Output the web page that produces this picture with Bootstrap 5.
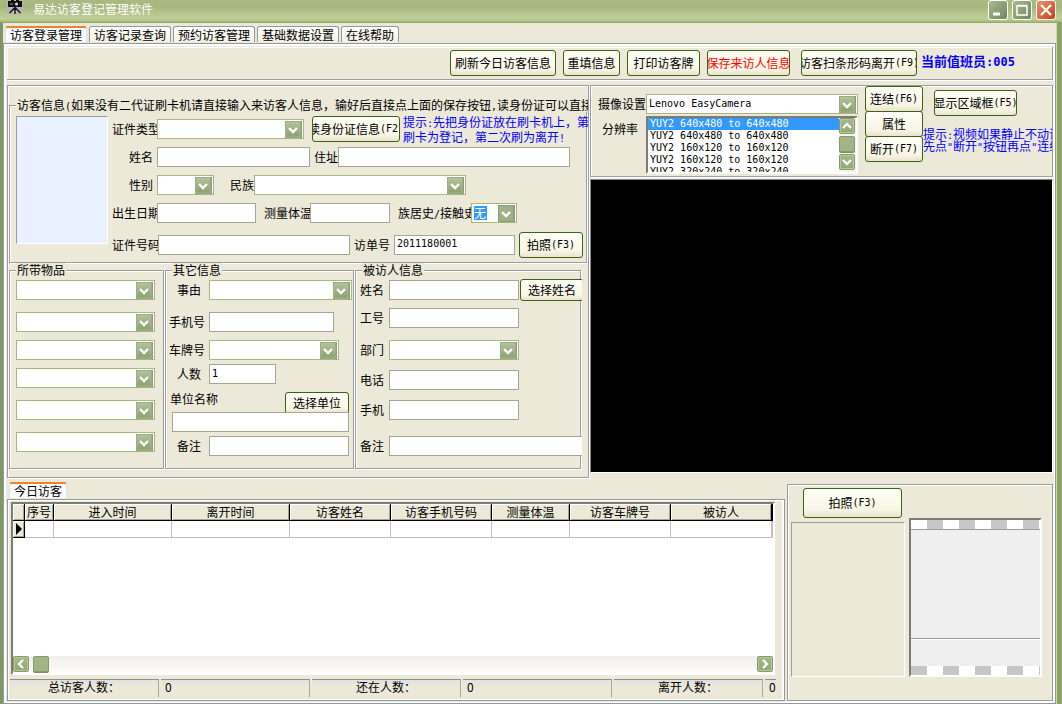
<!DOCTYPE html>
<html lang="zh-CN">
<head>
<meta charset="utf-8">
<meta name="viewport" content="width=device-width, initial-scale=1">
<title>易达访客登记管理软件</title>
<link href="https://cdn.jsdelivr.net/npm/bootstrap@5.3.0/dist/css/bootstrap.min.css" rel="stylesheet">
<style>
  :root { --face:#ece9d8; --edge:#9d9da1; --tabline:#919b9c; --green:#a5b97f; }
  body { background:var(--face); color:#000; font-family:"Noto Sans CJK SC",sans-serif; font-size:12px; line-height:14px; }
  .ltn, .edit, .listbox { font-family:"DejaVu Sans Mono","Noto Sans CJK SC",monospace; font-size:10px; }
  .ltn { line-height:0; }
  .text-note { color:#00f; }

  /* window frame */
  .frame { min-height:100vh; border-left:3px solid #7f9763; border-right:5px solid #8ba069; background:var(--face); box-shadow:inset -1px 0 #cdd8ae; }
  .titlebar { height:23px; margin:0 -5px 0 -3px; padding:0 6px 4px 7px; color:#fff; border-bottom:1px solid #94a86c;
    background:linear-gradient(#a9bb82,#a6b67e 30%,#b3c28a 55%,#c0cf97 85%,#a6b97d); }
  .titlebar .caption { padding-left:10px; line-height:18px; }
  .capbtn { width:20px; height:20px; padding:0; border:1px solid #fff; border-radius:3px; background:linear-gradient(135deg,#a9b88f,#70885a); line-height:0; }
  .capbtn.close-win { background:linear-gradient(135deg,#f0906f,#c8401c); }

  /* tabs */
  .tabs-xp { padding:3px 0 1px 2px; gap:2px; border:0; }
  .tabs-xp .nav-link { height:16px; padding:1px 4px 0; border:1px solid var(--tabline); border-bottom:0; border-radius:3px 3px 0 0; color:#000;
    background:linear-gradient(#fff,#f3f0e2); line-height:14px; margin:0; }
  .tabs-xp .nav-link.active { color:#000; background:#fcfcfe; border-top:2px solid #e5852f; padding-top:0; }
  .page { border:1px solid var(--tabline); box-shadow:inset 2px 2px #fff,inset -1px -1px #fff; padding:3px 2px 2px 3px; margin-right:1px; }

  .etched { border:1px solid var(--edge); box-shadow:inset 1px 1px #fff,1px 1px #fff; }
  .toolbar { height:33px; border-width:0 1px 1px 0; padding-right:37px; margin-bottom:5px; }
  .duty { font-size:13px; padding-bottom:4px; }
  .duty .ltn { font-size:12px; }
  .me-7 { margin-right:7px; }

  /* controls */
  .btn-xp { display:inline-flex; align-items:center; justify-content:center; overflow:hidden; white-space:nowrap; flex:none; height:26px; padding:0;
    border:1px solid #3a6410; border-radius:3px; color:#000; background:linear-gradient(#fffff6,#f8f5e4 75%,#ebe2cf); font-size:12px; line-height:14px; }
  .btn-xp.low { height:22px; }
  .btn-xp.tall { height:30px; }
  .btn-xp.save { color:#f00; }
  .edit, .combo { height:20px; border-radius:0; background-color:#fff; color:#000; flex:none; min-width:0; outline-offset:-1px; }
  .edit { border:1px solid #a7a694; padding:0 2px 2px; }
  .combo { appearance:none; border:1px solid var(--green); padding:0 20px 0 2px; font-size:12px; line-height:14px;
    background-image:url("data:image/svg+xml,%3Csvg xmlns='http://www.w3.org/2000/svg' width='17' height='17'%3E%3Cdefs%3E%3ClinearGradient id='g' x2='0' y2='1'%3E%3Cstop stop-color='%23b3c299'/%3E%3Cstop offset='1' stop-color='%238aa16c'/%3E%3C/linearGradient%3E%3C/defs%3E%3Crect width='17' height='17' fill='%238f9c7c'/%3E%3Crect x='1' y='1' width='14' height='15' fill='url(%23g)' stroke='%23b9c7a3' stroke-width='.6'/%3E%3Cpath d='M4 7l4 4 4-4' fill='none' stroke='%23fff' stroke-width='2.4'/%3E%3C/svg%3E");
    background-repeat:no-repeat; background-position:right 1px center; }
  .combo.latin { font-family:"DejaVu Sans Mono",monospace; font-size:10px; }
  .combo.picked { color:#fff; background-image:url("data:image/svg+xml,%3Csvg xmlns='http://www.w3.org/2000/svg' width='17' height='17'%3E%3Crect width='17' height='17' fill='%238f9c7c'/%3E%3Crect x='1' y='1' width='14' height='15' fill='%239db184'/%3E%3Cpath d='M4 7l4 4 4-4' fill='none' stroke='%23fff' stroke-width='2.4'/%3E%3C/svg%3E"),linear-gradient(#39f,#39f);
    background-position:right 1px center,2px 2px; background-size:auto,13px 14px; }
  .combo.picked option { color:#000; }
  .lb { flex:none; overflow:hidden; white-space:nowrap; text-align:right; }
  .w46 { width:46px } .w56 { width:57px } .w58 { width:58px } .w64 { width:64px } .w67 { width:67px } .w72 { width:73px } .w80 { width:80px } .w82 { width:83px }
  .w88 { width:88px } .w99 { width:99px } .w106 { width:106px } .w116 { width:116px } .w121 { width:121px } .w125 { width:125px } .w130 { width:130px }
  .w143 { width:143px } .w147 { width:147px } .w153 { width:153px } .w177 { width:177px } .w192 { width:192px } .w212 { width:212px } .w232 { width:232px }
  .mb-12 { margin-bottom:12px } .mb-10 { margin-bottom:10px }

  /* entry form */
  .entry { width:582px; flex:none; overflow:hidden; padding:12px 0 7px 1px; }
  .group { border:1px solid var(--edge); box-shadow:inset 1px 1px #fff,1px 1px #fff; min-width:0; padding-top:3px; }
  .group > legend { float:none; width:auto; margin:0 0 0 6px; padding:0 1px; font-size:12px; line-height:14px; white-space:nowrap; background:var(--face); }
  .group.visitor { width:578px; }
  .photo { width:92px; height:128px; margin:1px 4px 0 6px; background:#e9f0ff; border:1px solid var(--edge); border-color:var(--edge) #fff #fff var(--edge); }
  .line { height:28px; display:flex; align-items:center; }
  .line.last { height:35px; }
  .line .lb.lead-in { width:45px; }
  .hint { line-height:15px; white-space:nowrap; padding-left:3px; }
  .lower { width:573px; gap:1px; overflow:hidden; padding-bottom:1px; }
  .goods { width:155px; padding-left:6px; }
  .goods .combo { display:block; width:139px; }
  .other { width:189px; } .other .lb { width:43px; }
  .host { width:226px; } .host .lb { width:32px; } .host .rowx { gap:1px; }
  .rowx { display:flex; align-items:center; height:20px; }

  /* camera */
  .picture-col { min-width:0; margin-left:1px; }
  .camera { height:92px; overflow:hidden; padding:0 0 0 7px; }
  .listwrap { width:212px; height:58px; margin-top:2px; border:2px solid; border-color:#7d7c74 #fff #fff #7d7c74; background:#fff; }
  .listbox { flex:1; min-width:0; height:54px; border:0; padding:0; overflow:hidden; scrollbar-width:none; background:#fff; outline:0; }
  .listbox::-webkit-scrollbar { display:none; }
  .listbox option { height:12px; min-height:12px; line-height:12px; padding:0 2px; color:#000; }
  .listbox option:checked { background:#39f linear-gradient(#39f,#39f); color:#fff; }
  .sbtn { width:16px; height:16px; padding:0; border:1px solid #869b6c; border-radius:2px; background:linear-gradient(#a6b88a,#92a873); box-shadow:inset 0 0 0 1px #b7c79d; line-height:0; flex:none; }
  .grip { width:16px; height:16px; border:1px solid #869b6c; border-radius:2px; background:#a3b587; box-shadow:0 1px #7d8c69; }
  .vbar { width:17px; background:#f6f4ee; padding-bottom:2px; }
  .linkcol { margin-left:7px; }
  .linkcol .btn-xp { display:flex; height:26px; margin-bottom:-1px; }
  .area .btn-xp { margin-left:11px; }
  .tip { line-height:12px; white-space:nowrap; padding-top:12px; }
  .video { flex:1; background:#000; border:1px solid #8a8a86; border-color:#8a8a86 #fff #fff #8a8a86; margin:2px 0 5px; }

  /* today's visitors */
  .bottom-row { padding-top:4px; gap:2px; }
  .today { border:1px solid var(--tabline); box-shadow:inset 1px 1px #fff,inset -2px -1px #fff; padding:2px 9px 3px 3px; }
  .sheet { background:#fff; border:2px solid; border-color:#7d7c74 #fff #fff #7d7c74; overflow:hidden; }
  .gridx { table-layout:fixed; width:100%; border-collapse:separate; border-spacing:0; }
  .gridx th { height:17px; padding:0; background:var(--face); border-right:1px solid #000; border-bottom:1px solid #000; box-shadow:inset 1px 1px #fff,inset -1px -1px #a5a394; font-weight:400; text-align:center; white-space:nowrap; overflow:hidden; }
  .gridx td { height:17px; padding:0; border-right:1px solid #c0c0c0; border-bottom:1px solid #c0c0c0; }
  .hbar { height:17px; background:linear-gradient(#f1efe9,#fdfdfa); }
  .status { margin:4px -1px 0 -1px; gap:2px; }
  .status > div { flex:0 0 149px; height:18px; line-height:14px; padding-left:4px; border-top:1px solid #8f8e82; border-right:1px solid #aca899; background:linear-gradient(#e0e2e0,#ece9d8 45%); }
  .status > div.text-center { padding:0; }
  .status > div:last-child { flex:1 1 0; border-right:0; min-width:0; overflow:hidden; }
  .snap { width:266px; flex:none; padding:3px 10px 23px 3px; margin-top:2px; }
  .sunk { border:1px solid; border-color:var(--edge) #fff #fff var(--edge); }
  .preview { width:133px; background:#efefef; border:2px solid; border-color:#7d7c74 #fff #fff #7d7c74; }
  .checks { height:10px; background:repeating-linear-gradient(90deg,#fff 0 16px,#c6c6c6 16px 32px); border-bottom:1px solid var(--edge); }
  .checks.alt { height:9px; background:repeating-linear-gradient(90deg,#c6c6c6 0 16px,#fff 16px 32px); border:0; }
  .ruleline { height:28px; border-top:1px solid var(--edge); box-shadow:inset 0 1px #fff; }
</style>
</head>
<body>
<div class="frame d-flex flex-column">
  <header class="titlebar d-flex align-items-start">
    <svg width="16" height="15" viewBox="0 0 16 15" aria-hidden="true"><rect width="16" height="14" fill="#b5b5b5"/><path d="M1 1h14v6H1zM4 0h3v1H4zM9 0h3v1H9z" fill="#111"/><circle cx="9.500" cy="4" r="1.500" fill="#ddd"/><path d="M3 4h3" stroke="#999"/><path d="M8 7v7M7.500 8l-5 5M8.500 8l5 5" stroke="#111" stroke-width="1.400"/></svg>
    <span class="caption me-auto">易达访客登记管理软件</span>
    <div class="d-flex gap-1">
      <button class="capbtn" type="button" aria-label="最小化"><svg width="18" height="18"><path d="M4 13h7" stroke="#fff" stroke-width="3"/></svg></button>
      <button class="capbtn" type="button" aria-label="最大化"><svg width="18" height="18"><path d="M4 5h10v9H4zM4 4.5h10" fill="none" stroke="#fff" stroke-width="1.5"/></svg></button>
      <button class="capbtn close-win" type="button" aria-label="关闭"><svg width="18" height="18"><path d="M4 4l10 10M14 4L4 14" stroke="#fff" stroke-width="2.2"/></svg></button>
    </div>
  </header>

  <ul class="nav nav-tabs tabs-xp">
    <li><button class="nav-link active" type="button">访客登录管理</button></li>
    <li><button class="nav-link" type="button">访客记录查询</button></li>
    <li><button class="nav-link" type="button">预约访客管理</button></li>
    <li><button class="nav-link" type="button">基础数据设置</button></li>
    <li><button class="nav-link" type="button">在线帮助</button></li>
  </ul>

  <main class="page flex-grow-1 d-flex flex-column">
    <div class="toolbar etched d-flex align-items-center justify-content-end">
      <button class="btn-xp w106 me-7" type="button">刷新今日访客信息</button>
      <button class="btn-xp w56 me-7" type="button">重填信息</button>
      <button class="btn-xp w72 me-7" type="button">打印访客牌</button>
      <button class="btn-xp w82 save me-7" type="button">保存来访人信息</button>
      <button class="btn-xp w116 ms-1 me-1" type="button">访客扫条形码离开<span class="ltn">(F9)</span></button>
      <strong class="duty text-note">当前值班员<span class="ltn">:005</span></strong>
    </div>

    <div class="d-flex">
      <form class="entry etched">
        <fieldset class="group visitor">
          <legend>访客信息<span class="ltn">(</span>如果没有二代证刷卡机请直接输入来访客人信息，输好后直接点上面的保存按钮<span class="ltn">,</span>读身份证可以直接</legend>
          <div class="d-flex">
            <div class="photo flex-shrink-0"></div>
            <div>
              <div class="line">
                <label class="lb lead-in" for="ctype">证件类型</label><select id="ctype" class="combo w147"></select>
                <button class="btn-xp w88 ms-2" type="button">读身份证信息<span class="ltn">(F2)</span></button>
                <div class="hint text-note">提示<span class="ltn">:</span>先把身份证放在刷卡机上，第<br>刷卡为登记，第二次刷为离开<span class="ltn">!</span></div>
              </div>
              <div class="line">
                <label class="lb lead-in pe-1" for="vname">姓名</label><input id="vname" class="edit w153">
                <label class="lb ms-1" for="addr">住址</label><input id="addr" class="edit w232">
              </div>
              <div class="line">
                <label class="lb lead-in pe-1" for="sex">性别</label><select id="sex" class="combo w56"></select>
                <label class="lb ms-3" for="nation">民族</label><select id="nation" class="combo w212"></select>
              </div>
              <div class="line">
                <label class="lb lead-in" for="birth">出生日期</label><input id="birth" class="edit w99">
                <label class="lb w46 ms-2" for="temp">测量体温</label><input id="temp" class="edit w80">
                <label class="lb w72 ms-2" for="hist">族居史<span class="ltn">/</span>接触史</label><select id="hist" class="combo picked w46"><option>无</option></select>
              </div>
              <div class="line last">
                <label class="lb w46" for="cno">证件号码</label><input id="cno" class="edit w192">
                <label class="lb ms-1" for="slip">访单号</label><input id="slip" class="edit w121 ms-1 me-1" value="2011180001">
                <button class="btn-xp w64" type="button">拍照<span class="ltn">(F3)</span></button>
              </div>
            </div>
          </div>
        </fieldset>

        <div class="lower d-flex">
          <fieldset class="group goods">
            <legend class="ms-0">所带物品</legend>
            <select class="combo mb-12" aria-label="物品一"></select>
            <select class="combo mb-2" aria-label="物品二"></select>
            <select class="combo mb-2" aria-label="物品三"></select>
            <select class="combo mb-12" aria-label="物品四"></select>
            <select class="combo mb-12" aria-label="物品五"></select>
            <select class="combo" aria-label="物品六"></select>
          </fieldset>

          <fieldset class="group other">
            <legend>其它信息</legend>
            <div class="rowx mb-12"><label class="lb pe-2" for="why">事由</label><select id="why" class="combo w143"></select></div>
            <div class="rowx mb-2"><label class="lb pe-1" for="mob">手机号</label><input id="mob" class="edit w125"></div>
            <div class="rowx mb-1"><label class="lb pe-1" for="plate">车牌号</label><select id="plate" class="combo w130"></select></div>
            <div class="rowx mb-2"><label class="lb pe-2" for="cnt">人数</label><input id="cnt" class="edit w67" value="1"></div>
            <div class="rowx justify-content-between align-items-start px-1"><label for="unit">单位名称</label><button class="btn-xp low w64" type="button">选择单位</button></div>
            <div class="rowx justify-content-end pe-1 mb-1"><input id="unit" class="edit w177"></div>
            <div class="rowx pe-1"><label class="lb pe-2" for="memo">备注</label><input id="memo" class="edit flex-fill"></div>
          </fieldset>

          <fieldset class="group host">
            <legend>被访人信息</legend>
            <div class="rowx mb-2"><label class="lb pe-1" for="hname">姓名</label><input id="hname" class="edit w130"><button class="btn-xp low w64" type="button">选择姓名</button></div>
            <div class="rowx mb-12"><label class="lb pe-1" for="hno">工号</label><input id="hno" class="edit w130"></div>
            <div class="rowx mb-10"><label class="lb pe-1" for="dept">部门</label><select id="dept" class="combo w130"></select></div>
            <div class="rowx mb-10"><label class="lb pe-1" for="tel">电话</label><input id="tel" class="edit w130"></div>
            <div class="rowx mb-3"><label class="lb pe-1" for="hmob">手机</label><input id="hmob" class="edit w130"></div>
            <div class="rowx mb-12"><label class="lb pe-1" for="hmemo">备注</label><input id="hmemo" class="edit w212"></div>
          </fieldset>
        </div>
      </form>

      <section class="picture-col flex-fill d-flex flex-column">
        <div class="camera etched d-flex">
          <div class="d-flex flex-column pt-2">
            <div class="rowx"><label class="lb" for="cam">摄像设置</label><select id="cam" class="combo latin w212"><option>Lenovo EasyCamera</option></select></div>
            <div class="d-flex justify-content-end">
              <label class="lb pt-2 pe-2" for="res">分辨率</label>
              <div class="listwrap d-flex">
                <select id="res" class="listbox" size="5">
                  <option selected>YUY2 640x480 to 640x480</option>
                  <option>YUY2 640x480 to 640x480</option>
                  <option>YUY2 160x120 to 160x120</option>
                  <option>YUY2 160x120 to 160x120</option>
                  <option>YUY2 320x240 to 320x240</option>
                </select>
                <div class="vbar d-flex flex-column justify-content-between">
                  <button class="sbtn" type="button" aria-label="向上"><svg width="14" height="14"><path d="M3 9l4-4 4 4" fill="none" stroke="#fff" stroke-width="2.2"/></svg></button>
                  <div class="grip"></div>
                  <button class="sbtn" type="button" aria-label="向下"><svg width="14" height="14"><path d="M3 5l4 4 4-4" fill="none" stroke="#fff" stroke-width="2.2"/></svg></button>
                </div>
              </div>
            </div>
          </div>
          <div class="linkcol">
            <button class="btn-xp w58" type="button">连结<span class="ltn">(F6)</span></button>
            <button class="btn-xp w58" type="button">属性</button>
            <button class="btn-xp w58" type="button">断开<span class="ltn">(F7)</span></button>
          </div>
          <div class="area d-flex flex-column align-items-start pt-1">
            <button class="btn-xp w82" type="button">显示区域框<span class="ltn">(F5)</span></button>
            <div class="tip text-note">提示<span class="ltn">:</span>视频如果静止不动请<br>先点<span class="ltn">"</span>断开<span class="ltn">"</span>按钮再点<span class="ltn">"</span>连结</div>
          </div>
        </div>
        <div class="video"></div>
      </section>
    </div>

    <div class="bottom-row d-flex flex-grow-1">
      <section class="flex-fill d-flex flex-column overflow-hidden">
        <ul class="nav nav-tabs tabs-xp pt-0"><li><button class="nav-link active" type="button">今日访客</button></li></ul>
        <div class="today flex-grow-1 d-flex flex-column">
          <div class="sheet flex-grow-1 d-flex flex-column">
            <table class="gridx">
              <colgroup><col style="width:12px"><col style="width:29px"><col style="width:118px"><col style="width:118px"><col style="width:101px"><col style="width:101px"><col style="width:78px"><col style="width:101px"><col style="width:101px"><col></colgroup>
              <thead><tr><th></th><th>序号</th><th>进入时间</th><th>离开时间</th><th>访客姓名</th><th>访客手机号码</th><th>测量体温</th><th>访客车牌号</th><th>被访人</th><th></th></tr></thead>
              <tbody><tr><th scope="row"><svg width="8" height="12" class="d-block mx-auto"><path d="M1 0v12l6-6z"/></svg></th><td></td><td></td><td></td><td></td><td></td><td></td><td></td><td></td><td></td></tr></tbody>
            </table>
            <div class="hbar mt-auto d-flex">
              <button class="sbtn" type="button" aria-label="向左"><svg width="14" height="14"><path d="M9 3L5 7l4 4" fill="none" stroke="#fff" stroke-width="2.2"/></svg></button>
              <div class="grip ms-1 me-auto"></div>
              <button class="sbtn" type="button" aria-label="向右"><svg width="14" height="14"><path d="M5 3l4 4-4 4" fill="none" stroke="#fff" stroke-width="2.2"/></svg></button>
            </div>
          </div>
          <div class="status d-flex">
            <div class="text-center">总访客人数：</div><div>0</div>
            <div class="text-center">还在人数：</div><div>0</div>
            <div class="text-center">离开人数：</div><div>0</div>
          </div>
        </div>
      </section>

      <section class="snap etched d-flex flex-column">
        <div class="ps-2"><button class="btn-xp tall w99 ms-1" type="button">拍照<span class="ltn">(F3)</span></button></div>
        <div class="d-flex flex-grow-1">
          <div class="sunk flex-fill mt-1 me-1"></div>
          <div class="preview d-flex flex-column">
            <div class="checks"></div>
            <div class="ruleline mt-auto"></div>
            <div class="checks alt"></div>
          </div>
        </div>
      </section>
    </div>
  </main>
</div>
<script src="https://cdn.jsdelivr.net/npm/bootstrap@5.3.0/dist/js/bootstrap.bundle.min.js"></script>
</body>
</html>
